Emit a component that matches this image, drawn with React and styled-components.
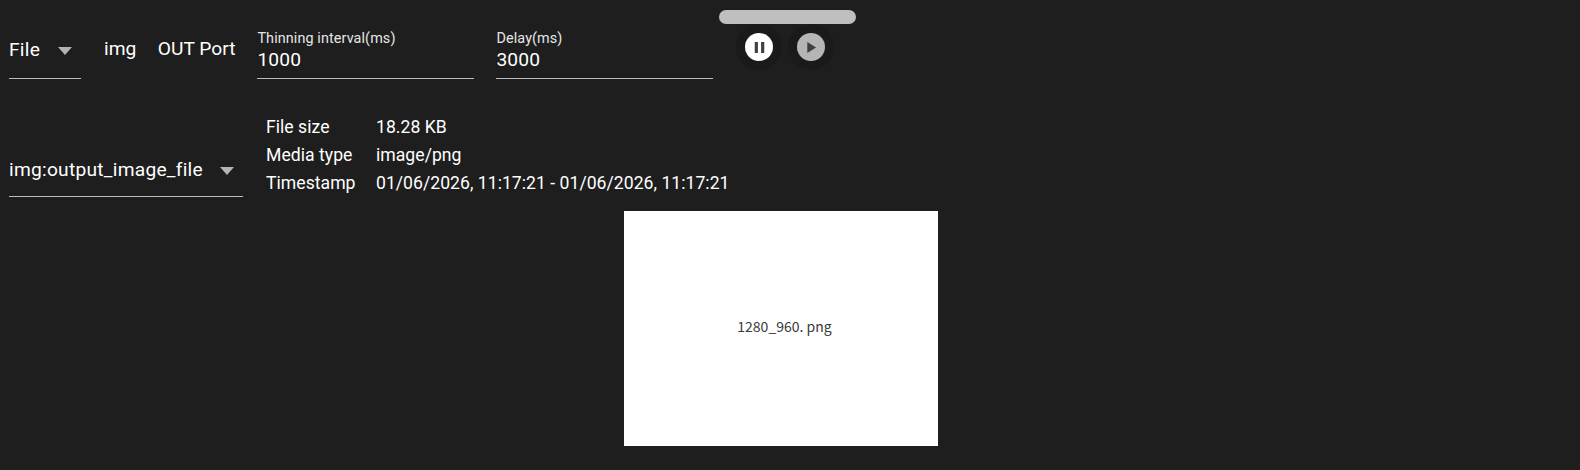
import React from "react";
import styled, { createGlobalStyle } from "styled-components";

const Global = createGlobalStyle`
  html, body { margin: 0; padding: 0; background: #1e1e1e; height: 100%; overflow: hidden; }
  body { font-family: Roboto, "Liberation Sans", sans-serif; color: #fff; }
`;
const Page = styled.div`
  width: 1580px;
  height: 470px;
  box-sizing: border-box;
  padding: 0 27px 0 9px;
  background: #1e1e1e;
`;
const TopRow = styled.div`
  display: flex;
  align-items: flex-start;
  height: 114px;
`;
const Select = styled.div`
  box-sizing: border-box;
  width: ${(p) => p.$width}px;
  height: ${(p) => p.$height}px;
  display: flex;
  align-items: flex-end;
  justify-content: space-between;
  border-bottom: 1px solid #bdbdbd;
  padding-bottom: ${(p) => p.$pad}px;
  font-size: 19.2px;
  line-height: 21px;
  letter-spacing: 0.25px;
`;
const Caret = styled.svg`
  width: 14px;
  height: 8px;
  margin: 0 9px 5px 0;
  fill: #b3b3b3;
`;
const FirstSelect = styled.div`
  margin-top: 29px;
`;
const Plain = styled.div`
  margin: 38px 0 0 ${(p) => p.$left}px;
  font-size: 19.2px;
  line-height: 21px;
`;
const Field = styled.div`
  box-sizing: border-box;
  flex: none;
  width: 217px;
  height: 50px;
  padding-top: 2px;
  margin: 29px 0 0 ${(p) => p.$left}px;
  border-bottom: 1px solid #bdbdbd;
`;
const FieldLabel = styled.div`
  font-size: 14.4px;
  line-height: 16px;
  letter-spacing: 0.1px;
  color: #e6e6e6;
`;
const FieldValue = styled.div`
  font-size: 19.2px;
  line-height: 21px;
  margin-top: 2px;
  letter-spacing: 0.15px;
`;
const Controls = styled.div`
  flex: none;
  width: 137px;
  margin: 10px 0 0 5.5px;
  display: flex;
  flex-direction: column;
`;
const Bar = styled.div`
  height: 14px;
  border-radius: 7px;
  background: #bfbfbf;
`;
const Buttons = styled.div`
  display: flex;
  justify-content: center;
  gap: 23.5px;
  margin-top: 9px;
  padding-right: 5px;
`;
const RoundButton = styled.div`
  width: 28px;
  height: 28px;
  border-radius: 50%;
  background: ${(p) => p.$bg};
  display: flex;
  align-items: center;
  justify-content: center;
  box-shadow: 0 0 0 9px #1a1a1a;
`;
const Icon = styled.svg`
  width: 19px;
  height: 19px;
  fill: #3f3f3f;
`;
const InfoRow = styled.div`
  display: flex;
  align-items: flex-start;
  height: 97px;
`;
const InfoSelect = styled.div`
  flex: none;
`;
const InfoTable = styled.div`
  margin: -0.5px 0 0 23px;
  display: grid;
  grid-template-columns: 110px auto;
  grid-auto-rows: 27.7px;
  align-items: center;
  font-size: 17.6px;
  letter-spacing: 0.03px;
`;
const Cell = styled.div`
  white-space: nowrap;
`;
const ImageWrap = styled.div`
  display: flex;
  justify-content: center;
`;
const Picture = styled.div`
  width: 314px;
  height: 235px;
  background: #fff;
  display: flex;
  align-items: center;
  justify-content: center;
  color: #3a3a3a;
  font-family: "Noto Sans CJK JP", sans-serif;
  font-size: 14px;
  padding: 0 0 5px 7px;
  box-sizing: border-box;
`;
const CaretIcon = () => (
  <Caret viewBox="0 0 14 8"><path d="M0 0h14L7 8z" /></Caret>
);

export default function App() {
  return (
    <Page>
      <Global />
      <TopRow>
        <FirstSelect>
          <Select $width={72} $height={50} $pad={18}>
            File
            <CaretIcon />
          </Select>
        </FirstSelect>
        <Plain $left={23}>img</Plain>
        <Plain $left={21.5}>OUT Port</Plain>
        <Field $left={22}>
          <FieldLabel>Thinning interval(ms)</FieldLabel>
          <FieldValue>1000</FieldValue>
        </Field>
        <Field $left={22}>
          <FieldLabel>Delay(ms)</FieldLabel>
          <FieldValue>3000</FieldValue>
        </Field>
        <Controls>
          <Bar />
          <Buttons>
            <RoundButton $bg="#ffffff">
              <Icon viewBox="0 0 24 24"><path d="M6 19h4V5H6v14zm8-14v14h4V5h-4z" /></Icon>
            </RoundButton>
            <RoundButton $bg="#b5b5b5">
              <Icon viewBox="0 0 24 24"><path d="M8 5v14l11-7z" /></Icon>
            </RoundButton>
          </Buttons>
        </Controls>
      </TopRow>
      <InfoRow>
        <InfoSelect>
          <Select $width={234} $height={83} $pad={16}>
            img:output_image_file
            <CaretIcon />
          </Select>
        </InfoSelect>
        <InfoTable>
          <Cell>File size</Cell>
          <Cell>18.28 KB</Cell>
          <Cell>Media type</Cell>
          <Cell>image/png</Cell>
          <Cell>Timestamp</Cell>
          <Cell>01/06/2026, 11:17:21 - 01/06/2026, 11:17:21</Cell>
        </InfoTable>
      </InfoRow>
      <ImageWrap>
        <Picture>1280_960. png</Picture>
      </ImageWrap>
    </Page>
  );
}
